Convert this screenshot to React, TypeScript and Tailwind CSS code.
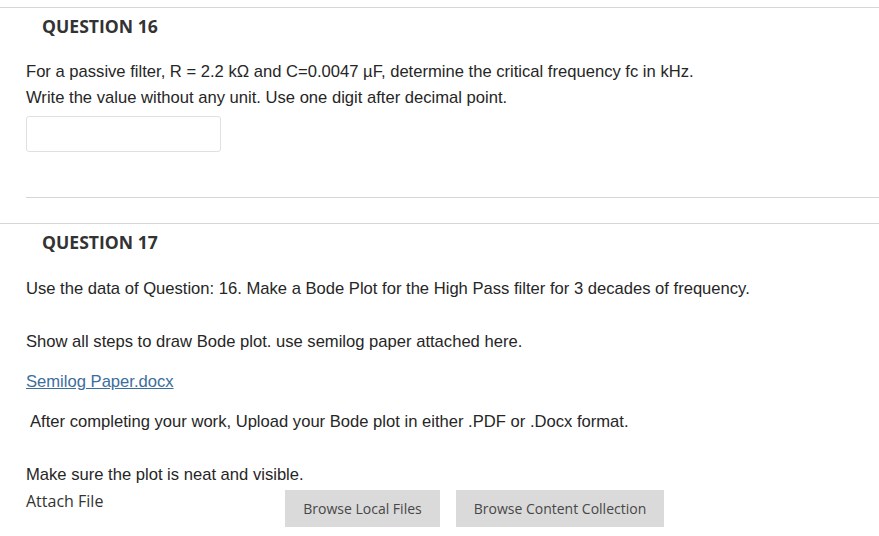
export default function App() {
  const body = "font-['Liberation_Sans',Arial,sans-serif] text-[16.6px] leading-[26px] text-[#262626]";
  const heading = "font-['Open_Sans',sans-serif] font-bold text-[17.6px] leading-[24px] text-[#333] pl-[42px]";

  return (
    <div className="w-[879px] h-[536px] overflow-hidden bg-white pt-[7px]">
      {/* question 16 */}
      <section className="border-t border-[#d6d6d6]">
        <h2 className={`${heading} pt-[6px]`}>QUESTION 16</h2>
        <div className="pl-[26px] mt-[21px]">
          <p className={body}>
            For a passive filter, R = 2.2 kΩ and C=0.0047 µF, determine the critical frequency fc in kHz.
          </p>
          <p className={body}>Write the value without any unit. Use one digit after decimal point.</p>
          <input
            type="text"
            className="mt-[5px] block w-[195px] h-[36px] rounded-[3px] border border-[#e0e0e0] bg-white outline-none"
          />
        </div>
        <div className="ml-[26px] mt-[45px] border-t border-[#d6d6d6]" />
      </section>

      {/* question 17 */}
      <section className="mt-[25px] border-t border-[#d6d6d6]">
        <h2 className={`${heading} pt-[6px]`}>QUESTION 17</h2>
        <div className="pl-[26px]">
          <p className={`${body} mt-[22px]`}>
            Use the data of Question: 16. Make a Bode Plot for the High Pass filter for 3 decades of frequency.
          </p>
          <p className={`${body} mt-[27px]`}>Show all steps to draw Bode plot. use semilog paper attached here.</p>
          <p className={`${body} mt-[14px]`}>
            <a href="#" className="text-[#3b6e9c] underline">
              Semilog Paper.docx
            </a>
          </p>
          <p className={`${body} mt-[14px] pl-[4px]`}>
            After completing your work, Upload your Bode plot in either .PDF or .Docx format.
          </p>
          <p className={`${body} mt-[27px]`}>Make sure the plot is neat and visible.</p>
          <div className="flex items-start">
            <span className="w-[259px] mt-[1px] font-['Open_Sans',sans-serif] text-[16px] leading-[24px] text-[#333]">
              Attach File
            </span>
            <div className="flex gap-[16px] mt-[2px]">
              <button className="h-[37px] w-[155px] bg-[#dadada] font-['Open_Sans',sans-serif] text-[14px] text-[#474747]">
                Browse Local Files
              </button>
              <button className="h-[37px] w-[208px] bg-[#dadada] font-['Open_Sans',sans-serif] text-[14px] text-[#474747]">
                Browse Content Collection
              </button>
            </div>
          </div>
        </div>
      </section>
    </div>
  );
}
